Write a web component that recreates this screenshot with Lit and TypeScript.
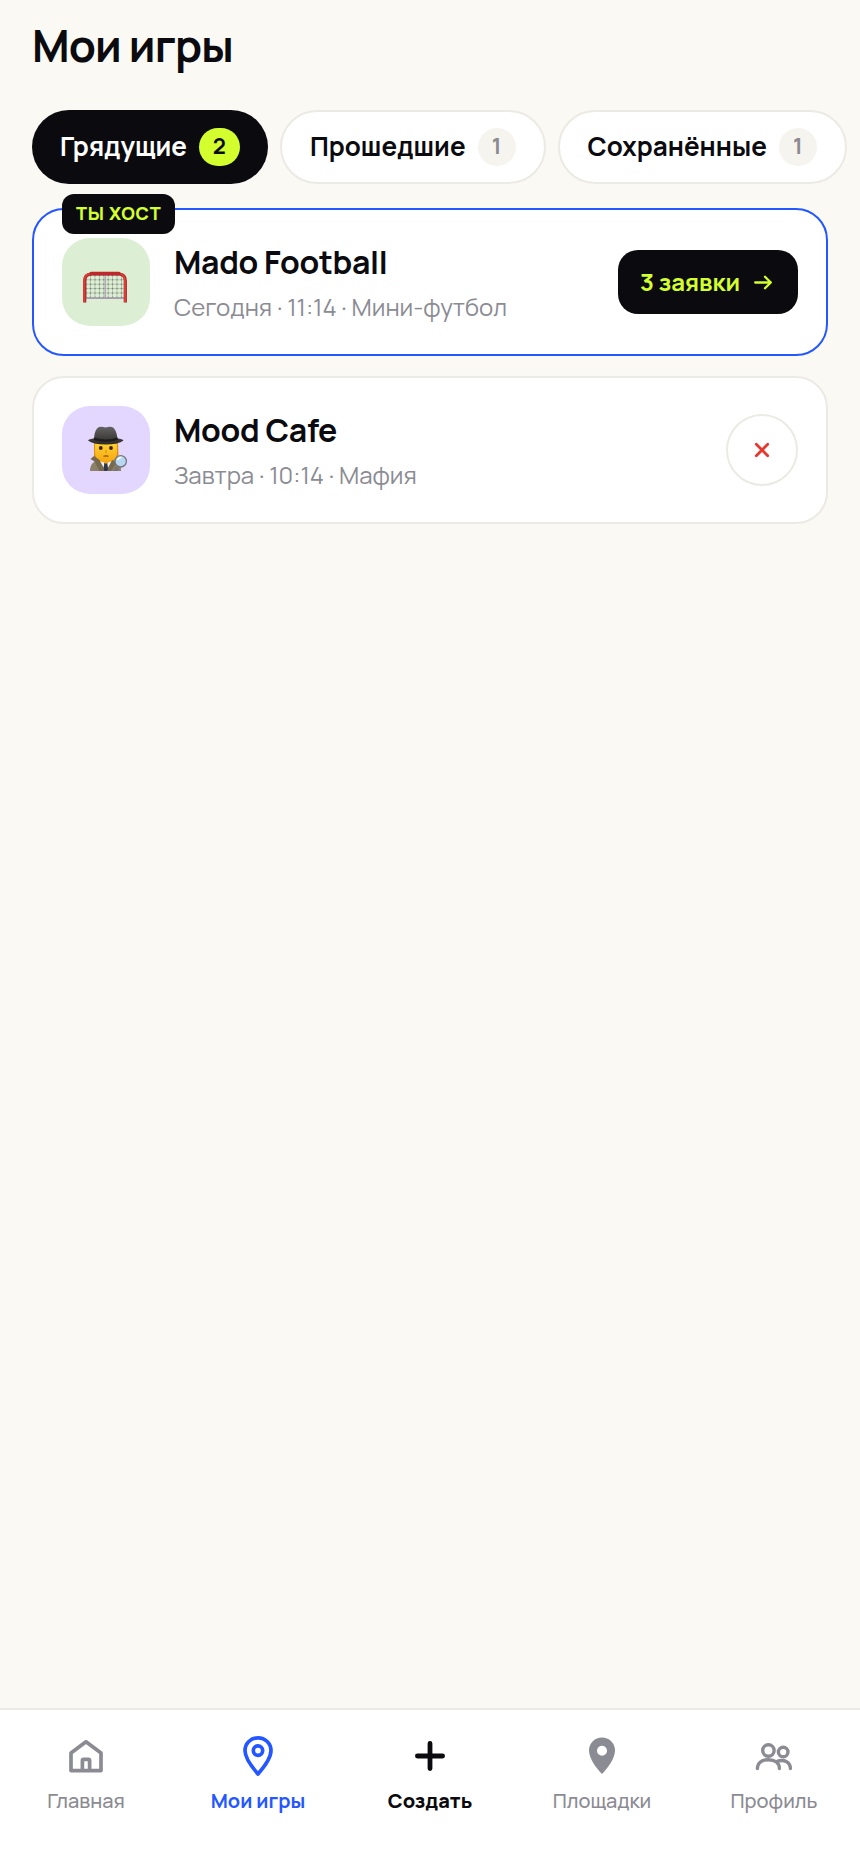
import { LitElement, html, css, svg, nothing } from "lit";
import { customElement, property, state } from "lit/decorators.js";
import { classMap } from "lit/directives/class-map.js";

const house = svg`<svg class="icon" viewBox="0 0 44 44" aria-hidden="true">
  <path d="M7 19 22 7.8 37 19V36.6H7Z" />
  <path d="M18.4 36V26.6a1.2 1.2 0 0 1 1.2-1.2h4.8a1.2 1.2 0 0 1 1.2 1.2V36" />
</svg>`;

const pin = svg`<svg class="icon" viewBox="0 0 44 44" aria-hidden="true">
  <path d="M22 40C17 34.4 9 24.6 9 16.6a13 12.8 0 0 1 26 0C35 24.6 27 34.4 22 40Z" />
  <circle cx="22" cy="16.6" r="4.7" />
</svg>`;

const plus = svg`<svg class="icon bold" viewBox="0 0 44 44" aria-hidden="true">
  <path d="M22 9.4V34.6M9.4 22H34.6" />
</svg>`;

const solidPin = svg`<svg class="icon solid" viewBox="0 0 44 44" aria-hidden="true">
  <path fill-rule="evenodd" d="M22 40C16.5 34 9 24.6 9 16.4a13 12.9 0 0 1 26 0C35 24.6 27.500 34 22 40ZM22 11.700a5 5 0 1 0 0 10 5 5 0 0 0 0-10Z" />
</svg>`;

const people = svg`<svg class="icon thin" viewBox="0 0 44 44" aria-hidden="true">
  <circle cx="16.400" cy="16.500" r="5.700" />
  <circle cx="31.200" cy="18" r="4.800" />
  <path d="M5.400 34.600C5.400 28.800 10 25.700 16.300 25.700S27.400 28.800 27.400 34.600" />
  <path d="M25.600 27.200C32.600 25.200 38.400 28.200 38.400 34.600" />
</svg>`;

const goal = svg`<svg class="art" viewBox="0 0 88 88" aria-hidden="true">
  <defs>
    <pattern id="net" width="4.400" height="4.400" patternUnits="userSpaceOnUse">
      <path d="M0 2.200H4.400M2.200 0V4.400" stroke="#a9b8a6" stroke-width=".7" fill="none" />
      <circle cx="2.200" cy="2.200" r=".8" fill="#6f7c6e" />
    </pattern>
  </defs>
  <path d="M24 60V42q0-5 5-5H57q5 0 5 5V60Z" fill="url(#net)" />
  <path d="M43.300 37V60" stroke="#b3a9b8" stroke-width="1.500" />
  <path d="M24 60.200H62" stroke="#a79dad" stroke-width="1.800" />
  <path d="M22.700 64.500V42.500q0-6 6.500-6.500H57q6.300.5 6.300 6.500V64.500" fill="none" stroke="#9e2a2e" stroke-width="3.200" />
  <path d="M22.300 64V42.500q0-6.300 6.500-6.800H57q6 .5 6 6.800V64" fill="none" stroke="#e23a35" stroke-width="2" />
  <path d="M29 35.400H57" stroke="#c3262a" stroke-width="3.400" stroke-linecap="round" />
</svg>`;

const detective = svg`<svg class="art" viewBox="0 0 88 88" aria-hidden="true">
  <defs>
    <linearGradient id="face" x1="0" y1="0" x2="0" y2="1">
      <stop offset="0" stop-color="#ffd02e" /><stop offset="1" stop-color="#f6a512" />
    </linearGradient>
    <linearGradient id="hat" x1="0" y1="0" x2="0" y2="1">
      <stop offset="0" stop-color="#656361" /><stop offset="1" stop-color="#2c2a29" />
    </linearGradient>
  </defs>
  <path d="M32 37h24l.5 14q0 5-3 6.500H35q-3-1.500-3-6.500Z" fill="#e08a10" />
  <path d="M28 65q0-7 5-9.500l7-2.500h8l7 2.500q4 2 4 9.500Z" fill="#8d8068" />
  <path d="M38 55l5.800 10L50 55l-1-4H39Z" fill="#f5f5f7" />
  <path d="M42.300 57h3l1 8h-5Z" fill="#2e3644" />
  <path d="M39 51h10v3l-5 4-5-4Z" fill="#e59612" />
  <path d="M33 38h22v8q0 10-11 10.500Q33 56 33 46Z" fill="url(#face)" />
  <path d="m37.500 54-5.500-4-3.500 3 4 2.500 5 9.500h5Zm12.500 0 5 2-6 9h-4Z" fill="#75694f" />
  <ellipse cx="38.800" cy="42" rx="1.900" ry="2.100" fill="#3b2313" />
  <ellipse cx="49" cy="42" rx="1.900" ry="2.100" fill="#3b2313" />
  <path d="M41.500 50.300q2.500-.9 5 0" stroke="#87450f" stroke-width="1.200" fill="none" />
  <path d="M44 44v3" stroke="#d98a10" stroke-width="1" />
  <path d="M26 34.500Q27 33 32 32.500q.5-9 5-11.400 2.500-.8 6.500.4 4-1.200 6.700-.4 4.300 2.400 5.300 11.400 5 .5 6 2-5 4-17.700 4T26 34.500Z" fill="url(#hat)" />
  <path d="M32 31.500q12 4 23.500 0l.4 2.500q-12 3.600-24.300 0Z" fill="#1e1c1c" />
  <path d="m54 60 3 3-2 2h-4Z" fill="#77746f" />
  <circle cx="58.700" cy="55.300" r="5.700" fill="#b9d7f0" stroke="#73777f" stroke-width="1.300" />
  <path d="M55.500 54q1-2.800 4-2.500" stroke="#fff" stroke-width="1.600" fill="none" />
</svg>`;

const arrow = svg`<svg class="arrow" viewBox="0 0 24 24" aria-hidden="true">
  <path d="M3.200 13.500H18.800M13 7.700 18.800 13.500 13 19.300" />
</svg>`;

const cross = svg`<svg class="cross" viewBox="0 0 16 16" aria-hidden="true">
  <path d="M2.300 2.300 13.700 13.700M13.700 2.300 2.300 13.700" />
</svg>`;

interface Game {
  title: string;
  meta: string;
  tone: "green" | "violet";
  art: unknown;
  requests?: string;
}

const GAMES: Game[] = [
  { title: "Mado Football", meta: "Сегодня · 11:14 · Мини-футбол", tone: "green", art: goal, requests: "3 заявки" },
  { title: "Mood Cafe", meta: "Завтра · 10:14 · Мафия", tone: "violet", art: detective },
];

const TABS = [
  { label: "Грядущие", count: 2 },
  { label: "Прошедшие", count: 1 },
  { label: "Сохранённые", count: 1 },
];

const NAV = [
  { label: "Главная", icon: house, kind: "" },
  { label: "Мои игры", icon: pin, kind: "current" },
  { label: "Создать", icon: plus, kind: "create" },
  { label: "Площадки", icon: solidPin, kind: "" },
  { label: "Профиль", icon: people, kind: "" },
];

@customElement("game-card")
export class GameCard extends LitElement {
  @property({ attribute: false }) game!: Game;

  static styles = css`
    :host {
      display: block;
    }
    .card {
      position: relative;
      display: flex;
      align-items: center;
      gap: 24px;
      padding: 28px;
      border: 2px solid #eceae4;
      border-radius: 32px;
      background: #fff;
    }
    .hosted {
      border-color: #2457ff;
    }
    .flag {
      position: absolute;
      top: -16px;
      left: 28px;
      padding: 0 14px 2px;
      border-radius: 12px;
      background: #0b0b0f;
      color: #d4ff2e;
      font-size: 18px;
      font-weight: 800;
      line-height: 38px;
      letter-spacing: 0.04em;
    }
    .thumb {
      flex: none;
      width: 88px;
      height: 88px;
      border-radius: 28px;
    }
    .green {
      background: #dceed3;
    }
    .violet {
      background: #e3d6ff;
    }
    .art {
      display: block;
      width: 100%;
    }
    .info {
      flex: 1;
      min-width: 0;
      display: grid;
      gap: 8px;
      padding-top: 2px;
    }
    .title {
      margin: 0;
      font-size: 32px;
      line-height: 40px;
      font-weight: 700;
      letter-spacing: -0.01em;
    }
    .meta {
      margin: 0;
      color: #8b8b93;
      font-size: 24px;
      line-height: 34px;
      font-weight: 400;
    }
    button {
      flex: none;
      font: inherit;
      cursor: pointer;
    }
    .requests {
      display: flex;
      align-items: center;
      gap: 12px;
      height: 64px;
      padding: 0 22px 2px;
      border: 0;
      border-radius: 20px;
      background: #0b0b0f;
      color: #d4ff2e;
      font-size: 24px;
      font-weight: 700;
    }
    .arrow {
      width: 24px;
      height: 24px;
    }
    .cross {
      width: 16px;
      height: 16px;
    }
    .arrow path,
    .cross path {
      fill: none;
      stroke: currentColor;
      stroke-width: 2.3;
      stroke-linecap: round;
      stroke-linejoin: round;
    }
    .cross path {
      stroke-width: 2.8;
    }
    .leave {
      display: grid;
      place-items: center;
      width: 72px;
      height: 72px;
      padding: 0;
      border: 2px solid #eceae4;
      border-radius: 50%;
      background: #fff;
      color: #e5382f;
    }
  `;

  render() {
    const g = this.game;
    return html`
      <article class=${classMap({ card: true, hosted: !!g.requests })}>
        ${g.requests ? html`<span class="flag">ТЫ ХОСТ</span>` : nothing}
        <div class="thumb ${g.tone}">${g.art}</div>
        <div class="info">
          <h2 class="title">${g.title}</h2>
          <p class="meta">${g.meta}</p>
        </div>
        ${g.requests
          ? html`<button class="requests" type="button">${g.requests}${arrow}</button>`
          : html`<button class="leave" type="button" aria-label="Отменить участие">${cross}</button>`}
      </article>
    `;
  }
}

@customElement("app-root")
export class AppRoot extends LitElement {
  @state() private active = 0;

  static styles = css`
    :host {
      display: flex;
      flex-direction: column;
      min-height: 100vh;
      background: #faf9f4;
      color: #0b0b0f;
      font-family: Manrope, Inter, "Noto Sans", sans-serif;
    }
    main {
      flex: 1;
      padding: 20px 32px 32px;
    }
    .heading {
      margin: 0 0 40px;
      font-size: 44px;
      line-height: 50px;
      font-weight: 700;
      letter-spacing: -0.02em;
    }
    .tabs {
      display: flex;
      gap: 12px;
      margin: 0 -32px 24px;
      padding: 0 12px 0 32px;
      overflow-x: auto;
      scrollbar-width: none;
    }
    .tab {
      flex: none;
      display: flex;
      align-items: center;
      gap: 12px;
      height: 74px;
      padding: 0 28px;
      border: 2px solid #eceae4;
      border-radius: 37px;
      background: #fff;
      color: inherit;
      font: inherit;
      font-size: 26px;
      line-height: 34px;
      font-weight: 700;
      cursor: pointer;
    }
    .label {
      padding-bottom: 2px;
    }
    .selected {
      border: 0;
      background: #0b0b0f;
      color: #fff;
    }
    .count {
      min-width: 38px;
      padding: 0 14px 2px;
      box-sizing: border-box;
      border-radius: 19px;
      background: #f6f4ee;
      color: #8b8b93;
      font-size: 22px;
      line-height: 36px;
      text-align: center;
    }
    .selected .count {
      background: #d4ff2e;
      color: #0b0b0f;
    }
    .games {
      display: grid;
      gap: 20px;
    }
    .nav {
      position: sticky;
      bottom: 0;
      display: grid;
      grid-template-columns: repeat(5, 1fr);
      padding: 24px 0 50px;
      border-top: 2px solid #eceae4;
      background: #fff;
    }
    .link {
      display: flex;
      flex-direction: column;
      align-items: center;
      gap: 10px;
      color: #8b8b93;
      font-size: 20px;
      line-height: 26px;
      font-weight: 500;
      text-decoration: none;
    }
    .current {
      color: #2457ff;
      font-weight: 700;
    }
    .create {
      color: #0b0b0f;
      font-weight: 800;
    }
    .icon {
      width: 44px;
      height: 44px;
      fill: none;
      stroke: currentColor;
      stroke-width: 3.7;
      stroke-linecap: round;
      stroke-linejoin: round;
    }
    .bold {
      stroke-width: 4.8;
    }
    .thin {
      stroke-width: 3.4;
    }
    .solid {
      fill: currentColor;
      stroke: none;
    }
  `;

  render() {
    return html`
      <main>
        <h1 class="heading">Мои игры</h1>
        <div class="tabs" role="tablist">
          ${TABS.map(
            (t, i) => html`<button
              type="button"
              role="tab"
              aria-selected=${i === this.active ? "true" : "false"}
              class=${classMap({ tab: true, selected: i === this.active })}
              @click=${() => (this.active = i)}
            ><span class="label">${t.label}</span><span class="count">${t.count}</span></button>`
          )}
        </div>
        <div class="games">
          ${GAMES.map((g) => html`<game-card .game=${g}></game-card>`)}
        </div>
      </main>
      <nav class="nav">
        ${NAV.map(
          (n) => html`<a class="link ${n.kind}" href="#" aria-current=${n.kind === "current" ? "page" : nothing}>${n.icon}<span>${n.label}</span></a>`
        )}
      </nav>
    `;
  }
}
